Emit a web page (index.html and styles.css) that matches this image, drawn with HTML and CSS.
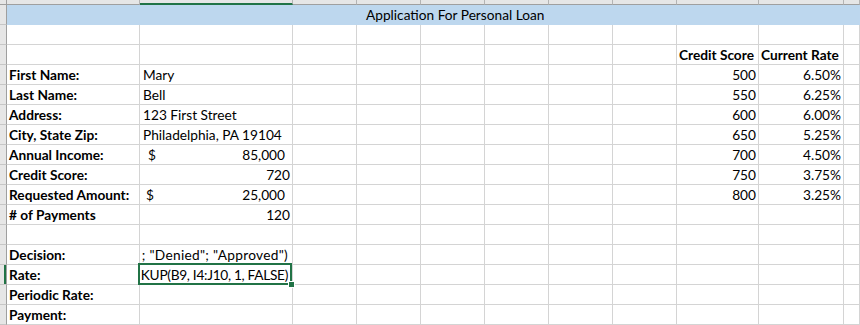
FILE: index.html
```html
<!DOCTYPE html>
<html lang="en">
<head>
<meta charset="utf-8">
<title>Application For Personal Loan</title>
<link rel="stylesheet" href="styles.css">
</head>
<body>
<div class="sheet">
  <!-- column header strip -->
  <div class="hdr corner"></div>
  <div class="hdr"></div>
  <div class="hdr sel"></div>
  <div class="hdr"></div><div class="hdr"></div><div class="hdr"></div><div class="hdr"></div><div class="hdr"></div><div class="hdr"></div>
  <div class="hdr"></div><div class="hdr"></div><div class="hdr"></div>

  <!-- row 1 -->
  <div class="rh"></div>
  <div class="title">Application For Personal Loan</div>

  <!-- row 2 -->
  <div class="rh"></div>
  <div class="c"></div><div class="c"></div><div class="c"></div><div class="c"></div><div class="c"></div><div class="c"></div><div class="c"></div><div class="c"></div><div class="c"></div><div class="c"></div><div class="c"></div>

  <!-- row 3 -->
  <div class="rh"></div>
  <div class="c"></div><div class="c"></div><div class="c"></div><div class="c"></div><div class="c"></div><div class="c"></div><div class="c"></div><div class="c"></div>
  <div class="c b">Credit Score</div><div class="c b">Current Rate</div><div class="c"></div>

  <!-- row 4 -->
  <div class="rh"></div>
  <div class="c b">First Name:</div><div class="c t">Mary</div>
  <div class="c"></div><div class="c"></div><div class="c"></div><div class="c"></div><div class="c"></div><div class="c"></div>
  <div class="c n">500</div><div class="c n">6.50%</div><div class="c"></div>

  <!-- row 5 -->
  <div class="rh"></div>
  <div class="c b">Last Name:</div><div class="c t">Bell</div>
  <div class="c"></div><div class="c"></div><div class="c"></div><div class="c"></div><div class="c"></div><div class="c"></div>
  <div class="c n">550</div><div class="c n">6.25%</div><div class="c"></div>

  <!-- row 6 -->
  <div class="rh"></div>
  <div class="c b">Address:</div><div class="c t">123 First Street</div>
  <div class="c"></div><div class="c"></div><div class="c"></div><div class="c"></div><div class="c"></div><div class="c"></div>
  <div class="c n">600</div><div class="c n">6.00%</div><div class="c"></div>

  <!-- row 7 -->
  <div class="rh"></div>
  <div class="c b">City, State Zip:</div><div class="c t">Philadelphia, PA 19104</div>
  <div class="c"></div><div class="c"></div><div class="c"></div><div class="c"></div><div class="c"></div><div class="c"></div>
  <div class="c n">650</div><div class="c n">5.25%</div><div class="c"></div>

  <!-- row 8 -->
  <div class="rh"></div>
  <div class="c b">Annual Income:</div><div class="c acct"><span>$</span><span>85,000</span></div>
  <div class="c"></div><div class="c"></div><div class="c"></div><div class="c"></div><div class="c"></div><div class="c"></div>
  <div class="c n">700</div><div class="c n">4.50%</div><div class="c"></div>

  <!-- row 9 -->
  <div class="rh"></div>
  <div class="c b">Credit Score:</div><div class="c n">720</div>
  <div class="c"></div><div class="c"></div><div class="c"></div><div class="c"></div><div class="c"></div><div class="c"></div>
  <div class="c n">750</div><div class="c n">3.75%</div><div class="c"></div>

  <!-- row 10 -->
  <div class="rh"></div>
  <div class="c b">Requested Amount:</div><div class="c acct tight"><span>$</span><span>25,000</span></div>
  <div class="c"></div><div class="c"></div><div class="c"></div><div class="c"></div><div class="c"></div><div class="c"></div>
  <div class="c n">800</div><div class="c n">3.25%</div><div class="c"></div>

  <!-- row 11 -->
  <div class="rh"></div>
  <div class="c b"># of Payments</div><div class="c n">120</div>
  <div class="c"></div><div class="c"></div><div class="c"></div><div class="c"></div><div class="c"></div><div class="c"></div>
  <div class="c"></div><div class="c"></div><div class="c"></div>

  <!-- row 12 -->
  <div class="rh"></div>
  <div class="c"></div><div class="c"></div><div class="c"></div><div class="c"></div><div class="c"></div><div class="c"></div><div class="c"></div><div class="c"></div><div class="c"></div><div class="c"></div><div class="c"></div>

  <!-- row 13 -->
  <div class="rh"></div>
  <div class="c b">Decision:</div>
  <div class="c"><div class="clip wide"><span>; "Denied"; "Approved")</span></div></div>
  <div class="c"></div><div class="c"></div><div class="c"></div><div class="c"></div><div class="c"></div><div class="c"></div><div class="c"></div><div class="c"></div><div class="c"></div>

  <!-- row 14 -->
  <div class="rh selrow"></div>
  <div class="c b">Rate:</div>
  <div class="c active"><div class="clip narrow"><span>KUP(B9, I4:J10, 1, FALSE)</span></div></div>
  <div class="c"></div><div class="c"></div><div class="c"></div><div class="c"></div><div class="c"></div><div class="c"></div><div class="c"></div><div class="c"></div><div class="c"></div>

  <!-- row 15 -->
  <div class="rh"></div>
  <div class="c b">Periodic Rate:</div>
  <div class="c"></div><div class="c"></div><div class="c"></div><div class="c"></div><div class="c"></div><div class="c"></div><div class="c"></div><div class="c"></div><div class="c"></div><div class="c"></div>

  <!-- row 16 -->
  <div class="rh"></div>
  <div class="c b">Payment:</div>
  <div class="c"></div><div class="c"></div><div class="c"></div><div class="c"></div><div class="c"></div><div class="c"></div><div class="c"></div><div class="c"></div><div class="c"></div><div class="c"></div>
</div>
</body>
</html>
```
FILE: styles.css
```css
html, body {
  margin: 0;
  padding: 0;
  background: #ffffff;
  overflow: hidden;
}

.sheet {
  width: 860px;
  height: 325px;
  overflow: hidden;
  display: grid;
  grid-template-columns: 7px 133px 153px 64px 64px 64px 64px 64px 64px 82px 85px 1fr;
  grid-template-rows: 5px repeat(16, 20px);
  font-family: Lato, "Open Sans", sans-serif;
  font-size: 13.7px;
  color: #000000;
}

.sheet > div {
  box-sizing: border-box;
  min-width: 0;
}

/* column header strip */
.hdr {
  background: #e6e6e6;
  border-right: 1px solid #b4b4b4;
  border-bottom: 1px solid #9f9f9f;
}
.hdr.corner {
  border-right-color: #9f9f9f;
}
.hdr.sel {
  border-bottom: 2px solid #217346;
}

/* row header strip */
.rh {
  background: #e6e6e6;
  border-right: 1px solid #9f9f9f;
  border-bottom: 1px solid #c6c6c6;
}
.rh.selrow {
  box-shadow: inset -2px 0 0 #217346;
}

/* title row */
.title {
  grid-column: 2 / -1;
  background: #bdd7ee;
  line-height: 20px;
  padding-left: 359px;
  white-space: nowrap;
}

/* cells */
.c {
  border-right: 1px solid #d4d4d4;
  border-bottom: 1px solid #d4d4d4;
  line-height: 19px;
  padding: 0 2px;
  white-space: nowrap;
  overflow: hidden;
}
.c.b {
  font-weight: 700;
}
.c.t {
  padding-left: 3px;
}
.c.n {
  text-align: right;
  padding-right: 2px;
}
.c.acct {
  display: flex;
  justify-content: space-between;
  padding-left: 8px;
  padding-right: 7px;
}
.c.acct.tight {
  padding-left: 6px;
}

/* right-aligned text clipped at the cell's left edge */
.clip {
  display: flex;
  justify-content: flex-end;
  overflow: hidden;
  margin-left: -1px;
  padding-right: 2px;
  height: 19px;
}
.clip span {
  flex: none;
}
.clip.wide span {
  letter-spacing: 0.3px;
}
.clip.narrow span {
  letter-spacing: -0.3px;
}

/* active cell selection */
.c.active {
  position: relative;
  overflow: visible;
}
.c.active::after {
  content: "";
  position: absolute;
  left: -2px;
  top: -2px;
  right: 0;
  bottom: -1px;
  border: 2px solid #217346;
  pointer-events: none;
}
.c.active::before {
  content: "";
  position: absolute;
  right: -3px;
  bottom: -4px;
  width: 5px;
  height: 5px;
  background: #217346;
  border: 1px solid #ffffff;
  z-index: 2;
}
```
